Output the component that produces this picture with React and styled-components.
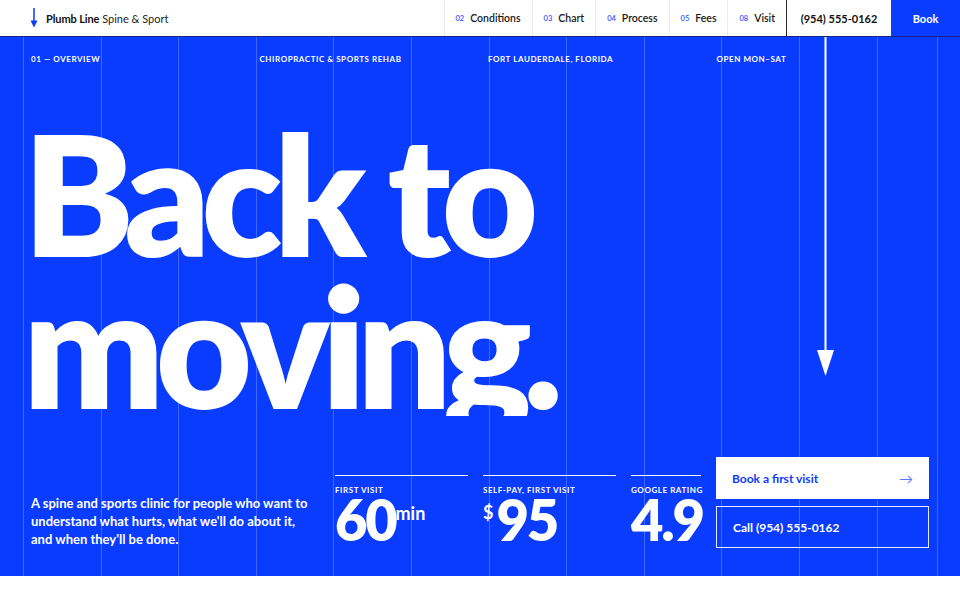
import React from 'react';
import styled, { createGlobalStyle } from 'styled-components';

const BLUE = '#0a3cff';

const GlobalStyle = createGlobalStyle`
  body {
    margin: 0;
    background: #ffffff;
    font-family: Lato, "Noto Sans", sans-serif;
    -webkit-font-smoothing: antialiased;
  }
`;

const Header = styled.header`
  display: flex;
  align-items: stretch;
  height: 36px;
  background: #ffffff;
  border-bottom: 1px solid #14268a;
`;

const Brand = styled.div`
  display: flex;
  align-items: center;
  gap: 8px;
  padding-left: 30px;
  font-size: 11px;
  color: #111;
`;

const BrandName = styled.span`
  font-weight: 700;
  letter-spacing: -0.01em;
`;

const BrandSub = styled.span`
  font-weight: 400;
  color: #222;
`;

const Nav = styled.nav`
  display: flex;
  margin-left: auto;
`;

const NavItem = styled.a`
  display: flex;
  align-items: center;
  gap: 6px;
  padding: 0 11px;
  border-left: 1px solid #ececec;
  font-size: 10.5px;
  font-weight: 600;
  color: #1a1a1a;
  text-decoration: none;
`;

const NavNum = styled.span`
  font-size: 7.5px;
  font-weight: 600;
  color: #2f55ff;
`;

const Phone = styled.a`
  display: flex;
  align-items: center;
  justify-content: center;
  width: 104px;
  border-left: 1px solid #2b2b2b;
  font-size: 11px;
  font-weight: 700;
  color: #111;
  text-decoration: none;
`;

const BookTab = styled.a`
  display: flex;
  align-items: center;
  justify-content: center;
  width: 69px;
  background: ${BLUE};
  font-size: 11px;
  font-weight: 700;
  color: #fff;
  text-decoration: none;
`;

const Hero = styled.section`
  position: relative;
  box-sizing: border-box;
  height: 539px;
  padding: 17px 31px 28px;
  display: flex;
  flex-direction: column;
  overflow: hidden;
  color: #fff;
  background-color: ${BLUE};
  background-image:
    repeating-linear-gradient(90deg, rgba(255, 255, 255, 0.22) 0 1px, transparent 1px 77.6px),
    linear-gradient(90deg, rgba(255, 255, 255, 0.22) 0 1px, transparent 1px);
  background-size: 855px 100%, 1px 100%;
  background-position: 23px 0, 937px 0;
  background-repeat: no-repeat;
`;

const Labels = styled.div`
  display: grid;
  grid-template-columns: repeat(4, 228.5px);
`;

const Label = styled.span`
  font-size: 8px;
  line-height: 10px;
  font-weight: 700;
  letter-spacing: 0.07em;
  text-transform: uppercase;
`;

const Headline = styled.h1`
  margin: 53px 0 0 -8px;
  height: 299px;
  overflow: hidden;
  font-size: 166px;
  line-height: 152px;
  font-weight: 800;
  letter-spacing: -0.052em;
`;

const Bottom = styled.div`
  margin-top: auto;
  display: grid;
  grid-template-columns: 304px 148px 148px 85px 213px;
  align-items: end;
`;

const Intro = styled.p`
  margin: 0;
  max-width: 284px;
  font-size: 13px;
  line-height: 18px;
  font-weight: 700;
`;

const Stat = styled.div`
  margin-right: 15px;
  padding: 9px 0 8px;
  border-top: 1.5px solid #fff;
`;

const StatLabel = styled.div`
  font-size: 8px;
  line-height: 10px;
  font-weight: 700;
  letter-spacing: 0.07em;
  text-transform: uppercase;
  white-space: nowrap;
`;

const StatValue = styled.div`
  display: flex;
  align-items: flex-start;
  margin-top: 5px;
  font-size: 56px;
  line-height: 40px;
  font-weight: 800;
  letter-spacing: -0.04em;
  white-space: nowrap;
`;

const Unit = styled.span`
  font-size: 18px;
  line-height: 18px;
  font-weight: 700;
  letter-spacing: 0;
  margin-top: ${(p) => p.$top}px;
  margin-right: ${(p) => p.$gap || 0}px;
`;

const Actions = styled.div`
  display: flex;
  flex-direction: column;
  gap: 7px;
`;

const Button = styled.a`
  box-sizing: border-box;
  display: flex;
  align-items: center;
  justify-content: space-between;
  height: 42px;
  padding: 0 16px;
  font-size: 12px;
  font-weight: 700;
  text-decoration: none;
  background: ${(p) => (p.$solid ? '#fff' : 'transparent')};
  color: ${(p) => (p.$solid ? BLUE : '#fff')};
  border: ${(p) => (p.$solid ? 'none' : '1.5px solid rgba(255, 255, 255, 0.9)')};
`;

const ButtonArrow = styled.span`
  font-size: 14px;
  font-weight: 400;
  color: #5a78ff;
`;

const DropArrow = styled.svg`
  position: absolute;
  left: 816px;
  top: 0;
`;

const LogoMark = () => (
  <svg width="8" height="20" viewBox="0 0 8 20">
    <line x1="4" y1="0" x2="4" y2="14" stroke={BLUE} strokeWidth="1.5" />
    <polygon points="0.5,12.5 7.5,12.5 4,19.5" fill={BLUE} />
  </svg>
);

const navLinks = [
  ['02', 'Conditions'],
  ['03', 'Chart'],
  ['04', 'Process'],
  ['05', 'Fees'],
  ['08', 'Visit'],
];

const labels = ['01 — Overview', 'Chiropractic & Sports Rehab', 'Fort Lauderdale, Florida', 'Open Mon–Sat'];

export default function App() {
  return (
    <>
      <GlobalStyle />
      <Header>
        <Brand>
          <LogoMark />
          <span>
            <BrandName>Plumb Line</BrandName> <BrandSub>Spine &amp; Sport</BrandSub>
          </span>
        </Brand>
        <Nav>
          {navLinks.map(([num, name]) => (
            <NavItem key={name} href="#">
              <NavNum>{num}</NavNum>
              {name}
            </NavItem>
          ))}
          <Phone href="#">(954) 555-0162</Phone>
          <BookTab href="#">Book</BookTab>
        </Nav>
      </Header>
      <Hero>
        <Labels>
          {labels.map((l) => (
            <Label key={l}>{l}</Label>
          ))}
        </Labels>
        <Headline>
          Back to
          <br />
          moving.
        </Headline>
        <Bottom>
          <Intro>
            A spine and sports clinic for people who want to understand what hurts, what we'll do about it, and
            when they'll be done.
          </Intro>
          <Stat>
            <StatLabel>First visit</StatLabel>
            <StatValue>
              60<Unit $top={4}>min</Unit>
            </StatValue>
          </Stat>
          <Stat>
            <StatLabel>Self-pay, first visit</StatLabel>
            <StatValue>
              <Unit $top={3} $gap={3}>$</Unit>95
            </StatValue>
          </Stat>
          <Stat>
            <StatLabel>Google rating</StatLabel>
            <StatValue>4.9</StatValue>
          </Stat>
          <Actions>
            <Button $solid href="#">
              Book a first visit
              <ButtonArrow>→</ButtonArrow>
            </Button>
            <Button href="#">Call (954) 555-0162</Button>
          </Actions>
        </Bottom>
        <DropArrow width="20" height="340" viewBox="0 0 20 340">
          <line x1="9.5" y1="0" x2="9.5" y2="318" stroke="#fff" strokeWidth="2" />
          <polygon points="1,313 18,313 9.5,339" fill="#fff" />
        </DropArrow>
      </Hero>
    </>
  );
}
